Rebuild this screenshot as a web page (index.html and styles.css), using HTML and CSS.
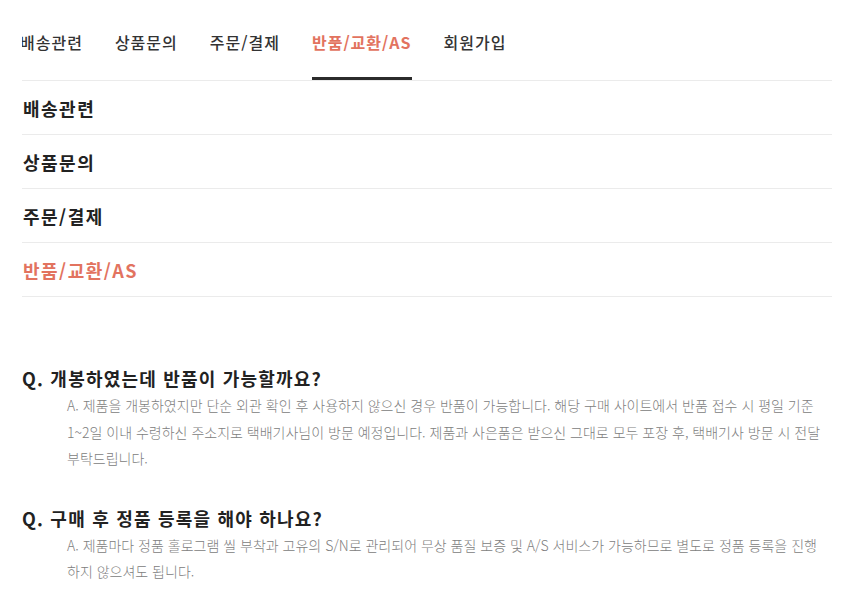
FILE: index.html
```html
<!DOCTYPE html>
<html lang="ko">
<head>
    <meta charset="UTF-8">
    <meta name="viewport" content="width=device-width, initial-scale=1.0">
    <title>FAQ</title>
    <link rel="stylesheet" href="styles.css">
</head>
<body>

<div class="page">
    <nav class="tabs">
        <div class="tab-track">
            <a href="#">배송관련</a>
            <a href="#">상품문의</a>
            <a href="#">주문/결제</a>
            <a href="#" class="active">반품/교환/AS</a>
            <a href="#">회원가입</a>
        </div>
    </nav>

    <ul class="cat-list">
        <li>배송관련</li>
        <li>상품문의</li>
        <li>주문/결제</li>
        <li class="active">반품/교환/AS</li>
    </ul>

    <div class="faq">
        <div class="faq-item">
            <h3 class="question">Q. 개봉하였는데 반품이 가능할까요?</h3>
            <p class="answer">A. 제품을 개봉하였지만 단순 외관 확인 후 사용하지 않으신 경우 반품이 가능합니다. 해당 구매 사이트에서 반품 접수 시 평일 기준 1~2일 이내 수령하신 주소지로 택배기사님이 방문 예정입니다. 제품과 사은품은 받으신 그대로 모두 포장 후, 택배기사 방문 시 전달 부탁드립니다.</p>
        </div>
        <div class="faq-item">
            <h3 class="question">Q. 구매 후 정품 등록을 해야 하나요?</h3>
            <p class="answer">A. 제품마다 정품 홀로그램 씰 부착과 고유의 S/N로 관리되어 무상 품질 보증 및 A/S 서비스가 가능하므로 별도로 정품 등록을 진행 하지 않으셔도 됩니다.</p>
        </div>
    </div>
</div>

</body>
</html>
```

FILE: styles.css
```css
body {
    margin: 0;
    padding: 0;
    background: #fff;
    font-family: "Noto Sans CJK KR", "Noto Sans", sans-serif;
    color: #222;
}
.page {
    width: 810px;
    margin-left: 22px;
}
.tabs {
    height: 80px;
    border-bottom: 1px solid #ebebeb;
    overflow: hidden;
}
.tab-track {
    display: flex;
    gap: 32px;
    height: 100%;
    margin-left: -2px;
}
.tab-track a {
    position: relative;
    display: flex;
    align-items: center;
    padding-top: 4px;
    font-size: 16px;
    font-weight: 500;
    letter-spacing: 1px;
    color: #333;
    text-decoration: none;
    white-space: nowrap;
}
.tab-track a.active {
    color: #e2735f;
    font-weight: 700;
}
.tab-track a.active::after {
    content: "";
    position: absolute;
    left: 0;
    right: 0;
    bottom: 0;
    height: 3px;
    background: #2b2b2b;
}
.cat-list {
    list-style: none;
    margin: 0;
    padding: 0;
}
.cat-list li {
    height: 53px;
    display: flex;
    align-items: center;
    padding-left: 1px;
    border-bottom: 1px solid #ebebeb;
    font-size: 18px;
    font-weight: 700;
    letter-spacing: 1.5px;
    color: #222;
}
.cat-list li.active {
    color: #e2735f;
}
.faq {
    padding-top: 67px;
}
.faq-item {
    margin-bottom: 32px;
}
.question {
    margin: 0;
    font-size: 18px;
    line-height: 28px;
    font-weight: 700;
    letter-spacing: 1.2px;
    color: #222;
}
.answer {
    margin: 0;
    padding-left: 45px;
    font-size: 14px;
    line-height: 26.5px;
    font-weight: 300;
    color: #808080;
}
```
